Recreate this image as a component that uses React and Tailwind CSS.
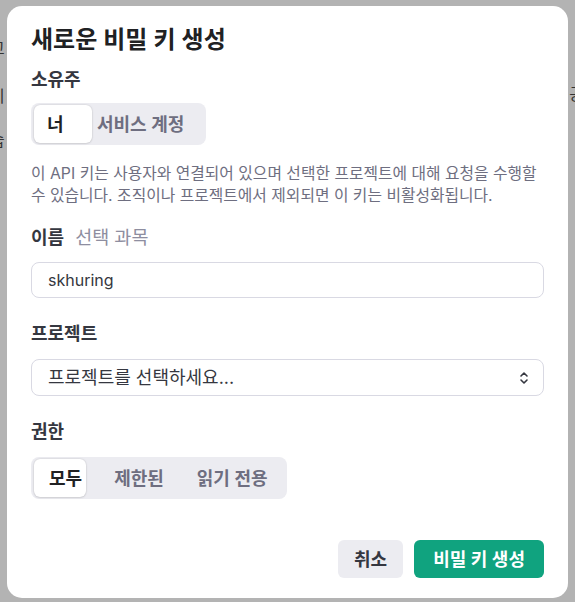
import React, { useState } from "react";

function Segmented({ items, selected, indicatorWidth, itemClasses }) {
  return (
    <div className="relative inline-flex self-start rounded-[8px] bg-[#ececf1] px-[3px] py-[2px]">
      <div
        className="absolute left-[3px] top-[2px] h-[38px] rounded-[6px] bg-white shadow-[0_0_2px_rgba(0,0,0,0.18),0_1px_2px_rgba(0,0,0,0.08)]"
        style={{ width: indicatorWidth }}
      />
      {items.map((it, i) => (
        <button
          key={it}
          type="button"
          className={
            "relative z-10 flex h-[38px] items-center text-[18px] font-semibold " +
            itemClasses[i] +
            (i === selected ? " text-[#202123]" : " text-[#6e6e80]")
          }
        >
          {it}
        </button>
      ))}
    </div>
  );
}

function App() {
  const [name, setName] = useState("skhuring");

  return (
    <div
      className="relative min-h-[602px] w-full overflow-hidden bg-[#b3b3b3] px-[7px] pt-[6px] pb-[5px]"
      style={{ fontFamily: '"Inter", "Noto Sans CJK KR", sans-serif' }}
    >
      {/* page behind the backdrop */}
      <span className="absolute left-[-10px] top-[36px] text-[16px] text-[#333]">교</span>
      <span className="absolute left-[-10px] top-[84px] text-[16px] text-[#333]">미</span>
      <span className="absolute left-[-10px] top-[128px] text-[16px] text-[#333]">습</span>
      <span className="absolute right-[-9px] top-[82px] text-[16px] text-[#333]">공</span>
      <span className="absolute right-[-6px] top-[314px] text-[18px] font-bold text-[#222]">!</span>

      <div className="relative z-10 flex flex-col rounded-[15px] bg-white px-[24px] pt-[20px] pb-[20px] text-[#202123]">
        <h2 className="text-[24px] font-semibold leading-[28px] text-[#202123]">새로운 비밀 키 생성</h2>

        <div className="mt-[14px] text-[18px] font-semibold leading-[24px] text-[#353740]">소유주</div>
        <div className="mt-[11px] flex">
          <Segmented
            items={["너", "서비스 계정"]}
            selected={0}
            indicatorWidth={58}
            itemClasses={["w-[58px] pl-[13px]", "pl-[5px] pr-[19px]"]}
          />
        </div>

        <p className="mt-[18px] text-[15.8px] leading-[22px] text-[#6e6e80]">
          이 API 키는 사용자와 연결되어 있으며 선택한 프로젝트에 대해 요청을 수행할 수 있습니다. 조직이나 프로젝트에서 제외되면 이 키는 비활성화됩니다.
        </p>

        <div className="mt-[18px] flex items-baseline gap-[11px] leading-[24px]">
          <span className="text-[18px] font-semibold text-[#353740]">이름</span>
          <span className="text-[18.5px] text-[#8e8ea0]">선택 과목</span>
        </div>
        <input
          value={name}
          onChange={(e) => setName(e.target.value)}
          className="mt-[12px] h-[36px] w-full rounded-[8px] border border-[#d9d9e3] px-[16px] text-[16px] text-[#353740] outline-none"
        />

        <div className="mt-[24px] text-[18px] font-semibold leading-[24px] text-[#353740]">프로젝트</div>
        <button
          type="button"
          className="mt-[13px] flex h-[37px] w-full items-center justify-between rounded-[8px] border border-[#d9d9e3] pl-[16px] pr-[14px] text-[18px] text-[#353740]"
        >
          <span>프로젝트를 선택하세요...</span>
          <svg width="10" height="14" viewBox="0 0 10 14" fill="none" stroke="#353740" strokeWidth="1.6" strokeLinecap="round" strokeLinejoin="round">
            <path d="M2 5 L5 2 L8 5" />
            <path d="M2 9 L5 12 L8 9" />
          </svg>
        </button>

        <div className="mt-[24px] text-[18px] font-semibold leading-[24px] text-[#353740]">권한</div>
        <div className="mt-[13px] flex">
          <Segmented
            items={["모두", "제한된", "읽기 전용"]}
            selected={0}
            indicatorWidth={52}
            itemClasses={["pl-[15px] pr-[16px]", "px-[16px]", "pl-[17px] pr-[16px]"]}
          />
        </div>

        <div className="mt-[41px] flex justify-end gap-[11px]">
          <button type="button" className="h-[38px] rounded-[6px] bg-[#ececf1] px-[16px] text-[18px] font-semibold text-[#353740]">
            취소
          </button>
          <button type="button" className="h-[38px] rounded-[6px] bg-[#10a37f] px-[19px] text-[18px] font-semibold text-white">
            비밀 키 생성
          </button>
        </div>
      </div>
    </div>
  );
}

export default App;
